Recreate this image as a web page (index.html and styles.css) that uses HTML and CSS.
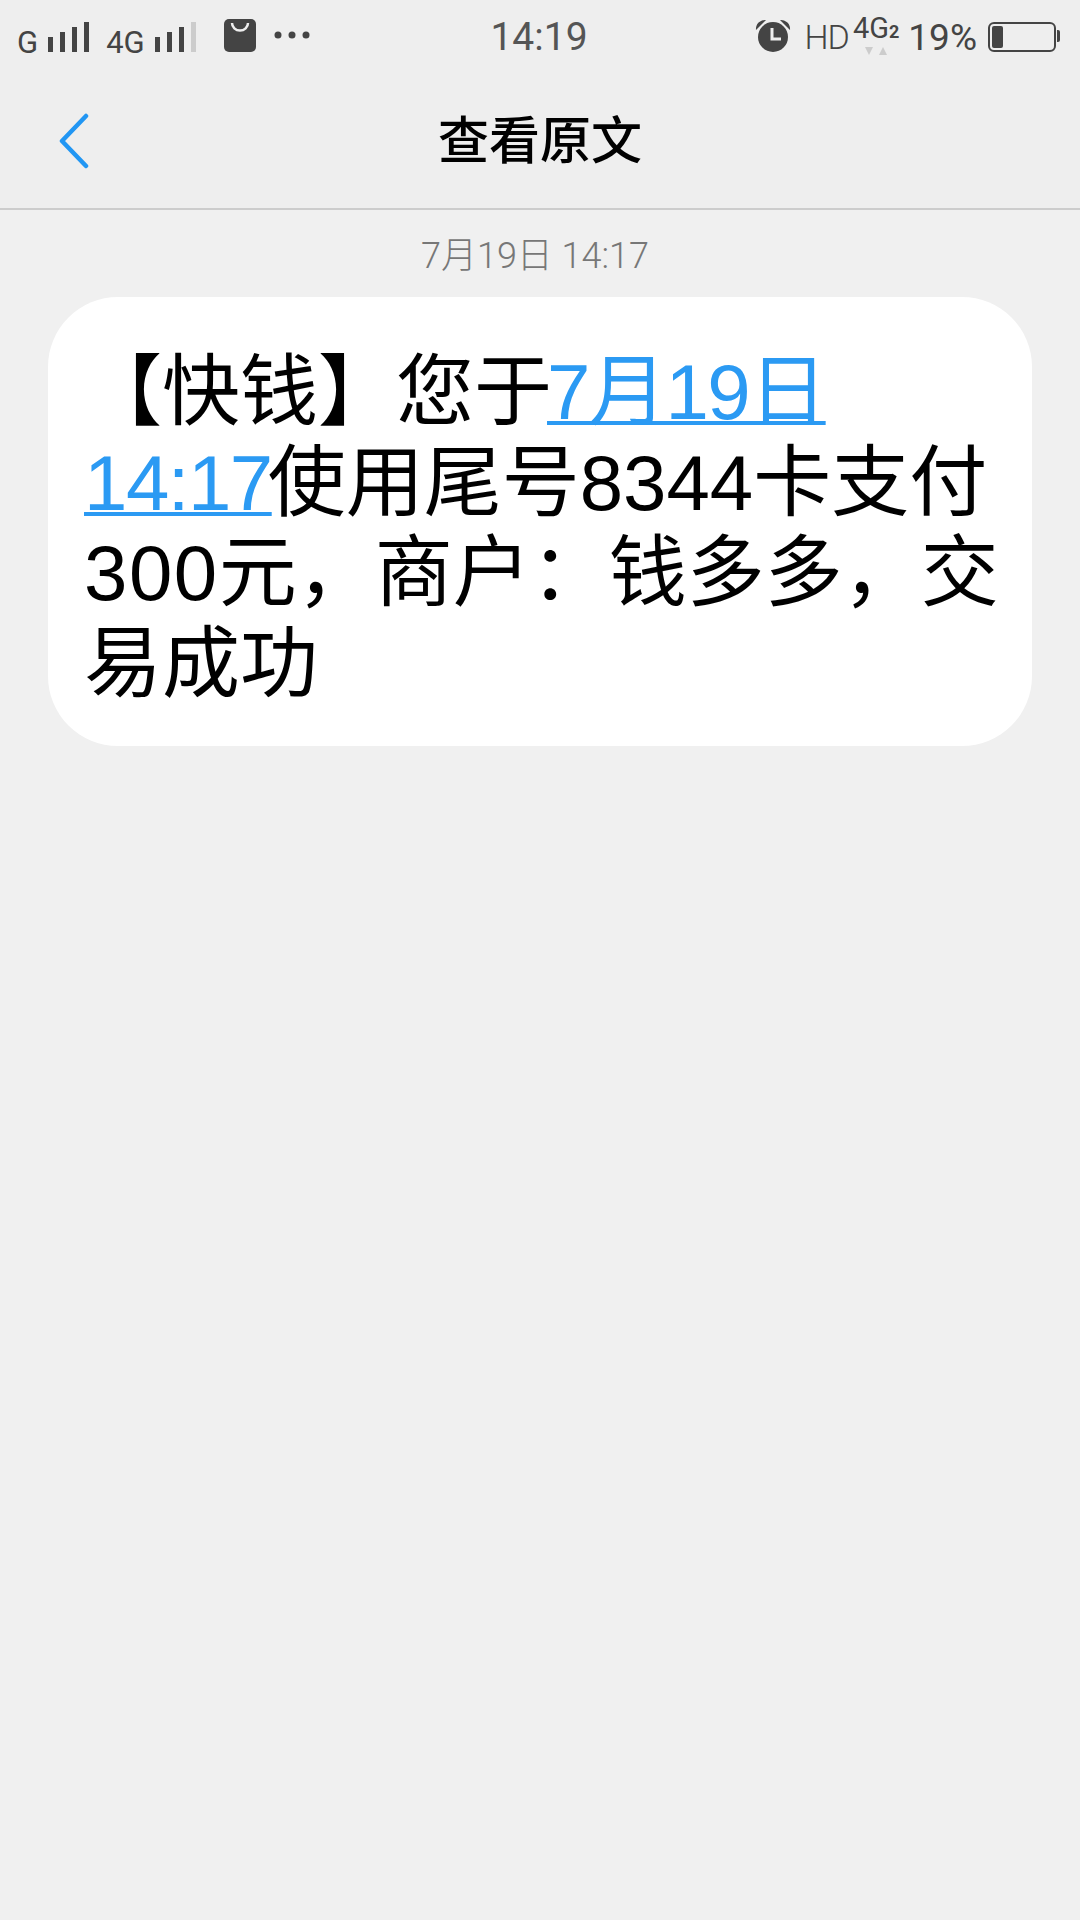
FILE: index.html
```html
<!DOCTYPE html>
<html lang="zh-CN">
<head>
    <meta charset="UTF-8">
    <meta name="viewport" content="width=device-width, initial-scale=1.0">
    <title>查看原文</title>
    <link rel="stylesheet" href="styles.css">
</head>
<body>
    <div class="status-bar">
        <div class="status-left">
            <span class="net net-g">G</span>
            <svg class="bars" width="42" height="32" viewBox="0 0 42 32"><g fill="#444"><rect x="0" y="15" width="5" height="15"/><rect x="12" y="10" width="5" height="20"/><rect x="24" y="5" width="5" height="25"/><rect x="36" y="0" width="5" height="30"/></g></svg>
            <span class="net net-4g">4G</span>
            <svg class="bars" width="42" height="32" viewBox="0 0 42 32"><g fill="#444"><rect x="0" y="15" width="5" height="15"/><rect x="12" y="10" width="5" height="20"/><rect x="24" y="5" width="5" height="25"/></g><rect x="36" y="0" width="5" height="30" fill="#ccc"/></svg>
            <svg class="bag" width="32" height="33" viewBox="0 0 32 33"><rect width="32" height="33" rx="5" fill="#444"/><path d="M8 4a8 7.5 0 0 0 16 0" fill="none" stroke="#eee" stroke-width="2.5"/></svg>
            <svg class="dots" width="36" height="8" viewBox="0 0 36 8"><g fill="#444"><circle cx="4" cy="4" r="3.5"/><circle cx="18" cy="4" r="3.5"/><circle cx="32" cy="4" r="3.5"/></g></svg>
        </div>
        <div class="status-time">14:19</div>
        <div class="status-right">
            <svg class="alarm" width="36" height="34" viewBox="0 0 36 34"><circle cx="18" cy="18" r="15" fill="#444"/><path d="M1 11a9 9 0 0 1 10-10zM35 11a9 9 0 0 0-10-10z" fill="#444"/><path d="M17 9v11h9" fill="none" stroke="#eee" stroke-width="3"/></svg>
            <span class="hd">HD</span>
            <div class="sim">
                <span class="sim-name">4G<b>2</b></span>
                <svg width="24" height="8" viewBox="0 0 24 8"><path d="M1 0h8l-4 8zM15 8h8l-4-8z" fill="#ccc"/></svg>
            </div>
            <span class="level">19%</span>
            <div class="battery"><div class="battery-fill"></div></div>
        </div>
    </div>

    <header class="nav">
        <svg class="back" width="30" height="58" viewBox="0 0 30 58"><path d="M27 4 3 29l24 25" fill="none" stroke="#2196f3" stroke-width="4.5" stroke-linecap="round" stroke-linejoin="round"/></svg>
        <h1>查看原文</h1>
    </header>

    <div class="date">7月19日 14:17</div>

    <div class="bubble">【快钱】您于<a href="#">7月19日 14:17</a>使用尾号8344卡支付<span class="amount">300</span>元，商户：钱多多，交易成功</div>
</body>
</html>
```

FILE: styles.css
```css
body {
    margin: 0;
    height: 1920px;
    overflow: hidden;
    background-color: #f0f0f0;
    font-family: "Liberation Sans", "Noto Sans CJK SC", sans-serif;
    color: #000;
}

.status-bar {
    display: grid;
    grid-template-columns: 1fr auto 1fr;
    align-items: center;
    height: 74px;
    background: #eeeeee;
    color: #444;
}

.status-left, .status-right {
    display: flex;
    align-items: center;
}

.status-left {
    padding-left: 17px;
}

.status-right {
    justify-content: flex-end;
    padding-right: 24px;
}

.net {
    font-family: Roboto, sans-serif;
    font-size: 31px;
    margin-top: 10px;
}

.net-g {
    margin-right: 10px;
}

.net-4g {
    margin: 10px 10px 0 16px;
}

.bars {
    margin-top: 2px;
}

.bag {
    margin: -4px 0 0 27px;
}

.dots {
    margin: -4px 0 0 18px;
}

.status-time {
    font-family: Roboto, sans-serif;
    font-size: 39px;
    color: #555;
    margin-right: 2px;
}

.alarm {
    margin: -3px 14px 0 0;
}

.hd {
    font-family: Roboto, sans-serif;
    font-size: 34px;
    font-weight: 300;
    letter-spacing: -1px;
    margin-right: 4px;
}

.sim {
    display: flex;
    flex-direction: column;
    align-items: center;
    margin: -6px 9px 0 0;
}

.sim-name {
    font-family: Roboto, sans-serif;
    font-size: 29px;
    line-height: 30px;
}

.sim-name b {
    font-size: 18px;
}

.level {
    font-family: Roboto, sans-serif;
    font-size: 37px;
    margin-right: 11px;
}

.battery {
    position: relative;
    box-sizing: border-box;
    width: 68px;
    height: 30px;
    padding: 2px;
    border: 2px solid #444;
    border-radius: 6px;
}

.battery::after {
    content: "";
    position: absolute;
    right: -6px;
    top: 6px;
    width: 3px;
    height: 12px;
    background: #444;
    border-radius: 0 2px 2px 0;
}

.battery-fill {
    width: 11px;
    height: 100%;
    background: #444;
    border-radius: 2px;
}

.nav {
    position: relative;
    display: flex;
    align-items: center;
    justify-content: center;
    height: 134px;
    background: #eeeeee;
    border-bottom: 2px solid #cccccc;
}

.back {
    position: absolute;
    left: 59px;
    top: 38px;
}

.nav h1 {
    margin: -8px 0 0;
    font-family: "Noto Sans CJK SC", sans-serif;
    font-size: 51px;
    font-weight: 500;
    line-height: 60px;
}

.date {
    margin: 21px 0 0 -10px;
    text-align: center;
    font-family: Roboto, "Noto Sans CJK SC", sans-serif;
    font-weight: 300;
    font-size: 36px;
    line-height: 50px;
    color: #777;
}

.bubble {
    box-sizing: border-box;
    width: 984px;
    height: 449px;
    margin: 16px 0 0 48px;
    padding: 50px 30px 0 36px;
    background: #fff;
    border-radius: 70px;
    font-family: "Liberation Sans", "Noto Sans CJK SC", sans-serif;
    font-size: 78px;
    line-height: 90.5px;
}

.bubble a {
    margin: 0 -4px 0 -5px;
    color: #2b9af3;
    letter-spacing: -1.5px;
    text-decoration-thickness: 4px;
}

.amount {
    letter-spacing: 1.5px;
}
```
